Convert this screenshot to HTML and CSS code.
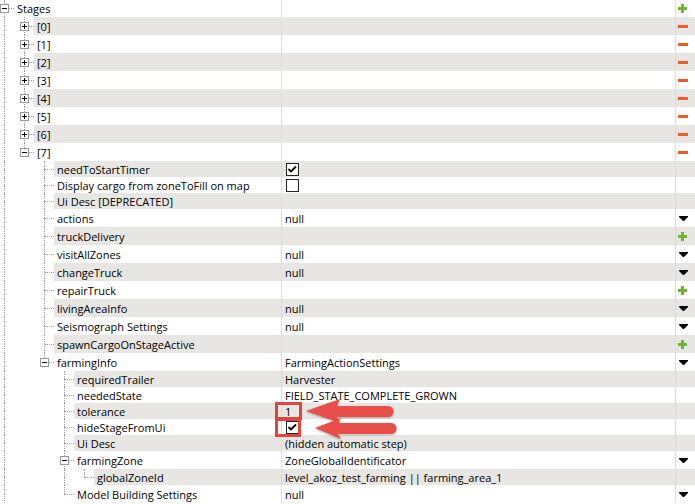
FILE: index.html
```html
<!DOCTYPE html>
<html>
<head>
<meta charset="utf-8">
<link rel="stylesheet" href="styles.css">
</head>
<body>
<div class="tree">

  <div class="row r17">
    <div class="name"><div class="gutter">
      <span class="c"><i class="vt"></i><i class="vb h"></i><svg class="box" viewBox="0 0 9 9"><rect x=".5" y=".5" width="8" height="8"/><path d="M2 4.5h5"/></svg></span>
    </div><span class="label">Stages</span></div>
    <div class="val"></div>
    <div class="btn"><svg class="plus" viewBox="0 0 9 9"><path d="M3 0h3v3h3v3h-3v3h-3v-3h-3v-3h3z"/></svg></div>
  </div>

  <div class="row r18 gray">
    <div class="name"><div class="gutter">
      <span class="c"><i class="vt"></i><i class="vb"></i></span>
      <span class="c"><i class="vt"></i><i class="vb h"></i><svg class="box" viewBox="0 0 9 9"><rect x=".5" y=".5" width="8" height="8"/><path d="M2 4.5h5M4.5 2v5"/></svg></span>
    </div><span class="label">[0]</span></div>
    <div class="val"></div>
    <div class="btn"><span class="minus"></span></div>
  </div>

  <div class="row r18">
    <div class="name"><div class="gutter">
      <span class="c"><i class="vt"></i><i class="vb"></i></span>
      <span class="c"><i class="vt"></i><i class="vb h"></i><svg class="box" viewBox="0 0 9 9"><rect x=".5" y=".5" width="8" height="8"/><path d="M2 4.5h5M4.5 2v5"/></svg></span>
    </div><span class="label">[1]</span></div>
    <div class="val"></div>
    <div class="btn"><span class="minus"></span></div>
  </div>

  <div class="row r18 gray">
    <div class="name"><div class="gutter">
      <span class="c"><i class="vt"></i><i class="vb"></i></span>
      <span class="c"><i class="vt"></i><i class="vb h"></i><svg class="box" viewBox="0 0 9 9"><rect x=".5" y=".5" width="8" height="8"/><path d="M2 4.5h5M4.5 2v5"/></svg></span>
    </div><span class="label">[2]</span></div>
    <div class="val"></div>
    <div class="btn"><span class="minus"></span></div>
  </div>

  <div class="row r18">
    <div class="name"><div class="gutter">
      <span class="c"><i class="vt"></i><i class="vb"></i></span>
      <span class="c"><i class="vt"></i><i class="vb h"></i><svg class="box" viewBox="0 0 9 9"><rect x=".5" y=".5" width="8" height="8"/><path d="M2 4.5h5M4.5 2v5"/></svg></span>
    </div><span class="label">[3]</span></div>
    <div class="val"></div>
    <div class="btn"><span class="minus"></span></div>
  </div>

  <div class="row r18 gray">
    <div class="name"><div class="gutter">
      <span class="c"><i class="vt"></i><i class="vb"></i></span>
      <span class="c"><i class="vt"></i><i class="vb h"></i><svg class="box" viewBox="0 0 9 9"><rect x=".5" y=".5" width="8" height="8"/><path d="M2 4.5h5M4.5 2v5"/></svg></span>
    </div><span class="label">[4]</span></div>
    <div class="val"></div>
    <div class="btn"><span class="minus"></span></div>
  </div>

  <div class="row r18">
    <div class="name"><div class="gutter">
      <span class="c"><i class="vt"></i><i class="vb"></i></span>
      <span class="c"><i class="vt"></i><i class="vb h"></i><svg class="box" viewBox="0 0 9 9"><rect x=".5" y=".5" width="8" height="8"/><path d="M2 4.5h5M4.5 2v5"/></svg></span>
    </div><span class="label">[5]</span></div>
    <div class="val"></div>
    <div class="btn"><span class="minus"></span></div>
  </div>

  <div class="row r18 gray">
    <div class="name"><div class="gutter">
      <span class="c"><i class="vt"></i><i class="vb"></i></span>
      <span class="c"><i class="vt"></i><i class="vb h"></i><svg class="box" viewBox="0 0 9 9"><rect x=".5" y=".5" width="8" height="8"/><path d="M2 4.5h5M4.5 2v5"/></svg></span>
    </div><span class="label">[6]</span></div>
    <div class="val"></div>
    <div class="btn"><span class="minus"></span></div>
  </div>

  <div class="row r18">
    <div class="name"><div class="gutter">
      <span class="c"><i class="vt"></i><i class="vb"></i></span>
      <span class="c"><i class="vt"></i><i class="hb"></i><svg class="box" viewBox="0 0 9 9"><rect x=".5" y=".5" width="8" height="8"/><path d="M2 4.5h5"/></svg></span>
    </div><span class="label">[7]</span></div>
    <div class="val"></div>
    <div class="btn"><span class="minus"></span></div>
  </div>

  <div class="row r16 gray">
    <div class="name"><div class="gutter">
      <span class="c"><i class="vt"></i><i class="vb"></i></span>
      <span class="c"></span>
      <span class="c"><i class="vt"></i><i class="vb h"></i></span>
    </div><span class="label">needToStartTimer</span></div>
    <div class="val"><svg class="chk" viewBox="0 0 13 13"><rect x=".5" y=".5" width="12" height="12"/><path d="M2.5 6l2.5 2.5 5-5"/></svg></div>
    <div class="btn"></div>
  </div>

  <div class="row r16">
    <div class="name"><div class="gutter">
      <span class="c"><i class="vt"></i><i class="vb"></i></span>
      <span class="c"></span>
      <span class="c"><i class="vt"></i><i class="vb h"></i></span>
    </div><span class="label">Display cargo from zoneToFill on map</span></div>
    <div class="val"><svg class="chk" viewBox="0 0 13 13"><rect x=".5" y=".5" width="12" height="12"/></svg></div>
    <div class="btn"></div>
  </div>

  <div class="row r16 gray">
    <div class="name"><div class="gutter">
      <span class="c"><i class="vt"></i><i class="vb"></i></span>
      <span class="c"></span>
      <span class="c"><i class="vt"></i><i class="vb h"></i></span>
    </div><span class="label">Ui Desc [DEPRECATED]</span></div>
    <div class="val"></div>
    <div class="btn"></div>
  </div>

  <div class="row r18">
    <div class="name"><div class="gutter">
      <span class="c"><i class="vt"></i><i class="vb"></i></span>
      <span class="c"></span>
      <span class="c"><i class="vt"></i><i class="vb h"></i></span>
    </div><span class="label">actions</span></div>
    <div class="val">null</div>
    <div class="btn"><svg class="drop" viewBox="0 0 9 5"><path d="M0 0h9v1l-4 4h-1l-4-4z"/></svg></div>
  </div>

  <div class="row r18 gray">
    <div class="name"><div class="gutter">
      <span class="c"><i class="vt"></i><i class="vb"></i></span>
      <span class="c"></span>
      <span class="c"><i class="vt"></i><i class="vb h"></i></span>
    </div><span class="label">truckDelivery</span></div>
    <div class="val"></div>
    <div class="btn"><svg class="plus" viewBox="0 0 9 9"><path d="M3 0h3v3h3v3h-3v3h-3v-3h-3v-3h3z"/></svg></div>
  </div>

  <div class="row r18">
    <div class="name"><div class="gutter">
      <span class="c"><i class="vt"></i><i class="vb"></i></span>
      <span class="c"></span>
      <span class="c"><i class="vt"></i><i class="vb h"></i></span>
    </div><span class="label">visitAllZones</span></div>
    <div class="val">null</div>
    <div class="btn"><svg class="drop" viewBox="0 0 9 5"><path d="M0 0h9v1l-4 4h-1l-4-4z"/></svg></div>
  </div>

  <div class="row r18 gray">
    <div class="name"><div class="gutter">
      <span class="c"><i class="vt"></i><i class="vb"></i></span>
      <span class="c"></span>
      <span class="c"><i class="vt"></i><i class="vb h"></i></span>
    </div><span class="label">changeTruck</span></div>
    <div class="val">null</div>
    <div class="btn"><svg class="drop" viewBox="0 0 9 5"><path d="M0 0h9v1l-4 4h-1l-4-4z"/></svg></div>
  </div>

  <div class="row r18">
    <div class="name"><div class="gutter">
      <span class="c"><i class="vt"></i><i class="vb"></i></span>
      <span class="c"></span>
      <span class="c"><i class="vt"></i><i class="vb h"></i></span>
    </div><span class="label">repairTruck</span></div>
    <div class="val"></div>
    <div class="btn"><svg class="plus" viewBox="0 0 9 9"><path d="M3 0h3v3h3v3h-3v3h-3v-3h-3v-3h3z"/></svg></div>
  </div>

  <div class="row r18 gray">
    <div class="name"><div class="gutter">
      <span class="c"><i class="vt"></i><i class="vb"></i></span>
      <span class="c"></span>
      <span class="c"><i class="vt"></i><i class="vb h"></i></span>
    </div><span class="label">livingAreaInfo</span></div>
    <div class="val">null</div>
    <div class="btn"><svg class="drop" viewBox="0 0 9 5"><path d="M0 0h9v1l-4 4h-1l-4-4z"/></svg></div>
  </div>

  <div class="row r18">
    <div class="name"><div class="gutter">
      <span class="c"><i class="vt"></i><i class="vb"></i></span>
      <span class="c"></span>
      <span class="c"><i class="vt"></i><i class="vb h"></i></span>
    </div><span class="label">Seismograph Settings</span></div>
    <div class="val">null</div>
    <div class="btn"><svg class="drop" viewBox="0 0 9 5"><path d="M0 0h9v1l-4 4h-1l-4-4z"/></svg></div>
  </div>

  <div class="row r18 gray">
    <div class="name"><div class="gutter">
      <span class="c"><i class="vt"></i><i class="vb"></i></span>
      <span class="c"></span>
      <span class="c"><i class="vt"></i><i class="vb h"></i></span>
    </div><span class="label">spawnCargoOnStageActive</span></div>
    <div class="val"></div>
    <div class="btn"><svg class="plus" viewBox="0 0 9 9"><path d="M3 0h3v3h3v3h-3v3h-3v-3h-3v-3h3z"/></svg></div>
  </div>

  <div class="row r18">
    <div class="name"><div class="gutter">
      <span class="c"><i class="vt"></i><i class="vb"></i></span>
      <span class="c"></span>
      <span class="c"><i class="vt"></i><i class="hb"></i><svg class="box" viewBox="0 0 9 9"><rect x=".5" y=".5" width="8" height="8"/><path d="M2 4.5h5"/></svg></span>
    </div><span class="label">farmingInfo</span></div>
    <div class="val">FarmingActionSettings</div>
    <div class="btn"><svg class="drop" viewBox="0 0 9 5"><path d="M0 0h9v1l-4 4h-1l-4-4z"/></svg></div>
  </div>

  <div class="row r16 gray">
    <div class="name"><div class="gutter">
      <span class="c"><i class="vt"></i><i class="vb"></i></span>
      <span class="c"></span>
      <span class="c"></span>
      <span class="c"><i class="vt"></i><i class="vb h"></i></span>
    </div><span class="label">requiredTrailer</span></div>
    <div class="val">Harvester</div>
    <div class="btn"></div>
  </div>

  <div class="row r16">
    <div class="name"><div class="gutter">
      <span class="c"><i class="vt"></i><i class="vb"></i></span>
      <span class="c"></span>
      <span class="c"></span>
      <span class="c"><i class="vt"></i><i class="vb h"></i></span>
    </div><span class="label">neededState</span></div>
    <div class="val">FIELD_STATE_COMPLETE_GROWN</div>
    <div class="btn"></div>
  </div>

  <div class="row r16 gray">
    <div class="name"><div class="gutter">
      <span class="c"><i class="vt"></i><i class="vb"></i></span>
      <span class="c"></span>
      <span class="c"></span>
      <span class="c"><i class="vt"></i><i class="vb h"></i></span>
    </div><span class="label">tolerance</span></div>
    <div class="val">1</div>
    <div class="btn"></div>
  </div>

  <div class="row r16">
    <div class="name"><div class="gutter">
      <span class="c"><i class="vt"></i><i class="vb"></i></span>
      <span class="c"></span>
      <span class="c"></span>
      <span class="c"><i class="vt"></i><i class="vb h"></i></span>
    </div><span class="label">hideStageFromUi</span></div>
    <div class="val"><svg class="chk" viewBox="0 0 13 13"><rect x=".5" y=".5" width="12" height="12"/><path d="M2.5 6l2.5 2.5 5-5"/></svg></div>
    <div class="btn"></div>
  </div>

  <div class="row r16 gray">
    <div class="name"><div class="gutter">
      <span class="c"><i class="vt"></i><i class="vb"></i></span>
      <span class="c"></span>
      <span class="c"></span>
      <span class="c"><i class="vt"></i><i class="vb h"></i></span>
    </div><span class="label">Ui Desc</span></div>
    <div class="val">(hidden automatic step)</div>
    <div class="btn"></div>
  </div>

  <div class="row r18">
    <div class="name"><div class="gutter">
      <span class="c"><i class="vt"></i><i class="vb"></i></span>
      <span class="c"></span>
      <span class="c"></span>
      <span class="c"><i class="vt"></i><i class="vb h"></i><svg class="box" viewBox="0 0 9 9"><rect x=".5" y=".5" width="8" height="8"/><path d="M2 4.5h5"/></svg></span>
    </div><span class="label">farmingZone</span></div>
    <div class="val">ZoneGlobalIdentificator</div>
    <div class="btn"><svg class="drop" viewBox="0 0 9 5"><path d="M0 0h9v1l-4 4h-1l-4-4z"/></svg></div>
  </div>

  <div class="row r16 gray">
    <div class="name"><div class="gutter">
      <span class="c"><i class="vt"></i><i class="vb"></i></span>
      <span class="c"></span>
      <span class="c"></span>
      <span class="c"><i class="vt"></i><i class="vb"></i></span>
      <span class="c"><i class="vt"></i><i class="hb"></i></span>
    </div><span class="label">globalZoneId</span></div>
    <div class="val">level_akoz_test_farming || farming_area_1</div>
    <div class="btn"></div>
  </div>

  <div class="row r18">
    <div class="name"><div class="gutter">
      <span class="c"><i class="vt"></i><i class="vb"></i></span>
      <span class="c"></span>
      <span class="c"></span>
      <span class="c"><i class="vt"></i><i class="hb"></i></span>
    </div><span class="label">Model Building Settings</span></div>
    <div class="val">null</div>
    <div class="btn"><svg class="drop" viewBox="0 0 9 5"><path d="M0 0h9v1l-4 4h-1l-4-4z"/></svg></div>
  </div>

</div>

<svg class="annot" width="695" height="504" viewBox="0 0 695 504">
  <rect class="rbox" x="276.5" y="403.5" width="24" height="15"/>
  <rect class="rbox" x="276.5" y="419.5" width="23" height="16"/>
  <path class="arrow" d="M306 411L340 399L337 406L388 406A5.5 5.5 0 0 1 388 417L337 417L340 423Z"/>
  <path class="arrow" d="M315 428L341 418L338 423L391 423A5.5 5.5 0 0 1 391 434L338 434L341 439Z"/>
</svg>
</body>
</html>
```

FILE: styles.css
```css
html, body {
  margin: 0;
  padding: 0;
  background: #fff;
}
body {
  position: relative;
  width: 695px;
  height: 504px;
  overflow: hidden;
  font-family: "Open Sans", "Noto Sans", sans-serif;
  font-size: 11px;
  color: #000;
}
.tree {
  display: flex;
  flex-direction: column;
}
.row {
  --bg: #fff;
  display: grid;
  grid-template-columns: 281px 394px 20px;
}
.row.gray {
  --bg: #e7e6e3;
}
.r16 { height: 16px; }
.r17 { height: 17px; }
.r18 { height: 18px; }

.name {
  display: flex;
  overflow: hidden;
  background: #fff;
}
.gutter {
  display: flex;
  margin-left: -6px;
  flex: none;
}
.c {
  display: grid;
  grid-template-columns: 10px 10px;
  grid-template-rows: 1fr 1fr;
  width: 20px;
  height: 100%;
  flex: none;
}
.r17 .c { grid-template-rows: 8px 9px; }
.c i { display: block; min-height: 0; }
.vt { grid-area: 1 / 2; border-left: 1px dotted #a0a0a0; }
.vb { grid-area: 2 / 2; border-left: 1px dotted #a0a0a0; }
.h { border-top: 1px dotted #a0a0a0; }
.hb { grid-area: 2 / 2; border-top: 1px dotted #a0a0a0; }
.box {
  grid-area: 1 / 1 / 3 / 3;
  width: 9px;
  height: 9px;
  margin: 5px 0 0 6px;
  z-index: 1;
}
.r17 .box { margin-top: 4px; }
.box rect { fill: #fff; stroke: #969696; stroke-width: 1; }
.box path { stroke: #000; stroke-width: 1; fill: none; }

.label {
  flex: 1;
  display: flex;
  align-items: center;
  padding-left: 3px;
  background: var(--bg);
  white-space: nowrap;
}
.val {
  display: flex;
  align-items: center;
  padding-left: 3px;
  border-left: 1px solid #dcdcdc;
  background: var(--bg);
  white-space: nowrap;
  overflow: hidden;
}
.btn {
  display: flex;
  align-items: center;
  padding-left: 2px;
  border-left: 1px solid #dcdcdc;
  background: var(--bg);
}
.plus {
  width: 9px;
  height: 9px;
  fill: #6cb82b;
}
.minus {
  display: block;
  width: 10px;
  height: 3px;
  background: #f05a28;
}
.drop {
  width: 9px;
  height: 5px;
  margin-left: 1px;
  fill: #000;
}
.chk {
  width: 13px;
  height: 13px;
  margin-left: 1px;
}
.chk rect { fill: #fff; stroke: #222; stroke-width: 1; }
.chk path { fill: none; stroke: #000; stroke-width: 1.8; }

.annot {
  position: absolute;
  left: 0;
  top: 0;
  pointer-events: none;
}
.rbox {
  fill: none;
  stroke: #e2443f;
  stroke-width: 3;
}
.arrow {
  fill: #e84f4a;
  filter: drop-shadow(0 1px 1px rgba(0, 0, 0, 0.3));
}
```
